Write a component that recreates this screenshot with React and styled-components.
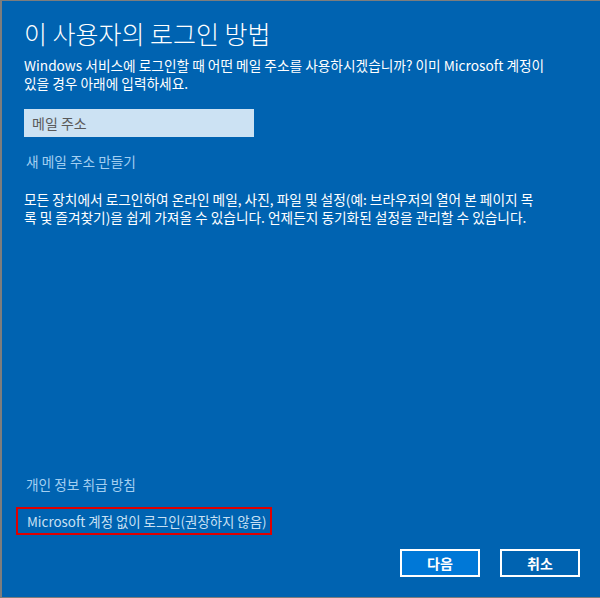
import React from "react";
import styled, { createGlobalStyle } from "styled-components";

const GlobalStyle = createGlobalStyle`
  html, body {
    margin: 0;
    padding: 0;
    background: #7d7d7d;
  }
  body {
    font-family: "Noto Sans CJK KR", "Noto Sans", sans-serif;
  }
`;

const App = () => {
  return (
    <>
      <GlobalStyle />
      <Window>
        <Title>이 사용자의 로그인 방법</Title>
        <Text>
          Windows 서비스에 로그인할 때 어떤 메일 주소를 사용하시겠습니까? 이미 Microsoft 계정이
          <br />
          있을 경우 아래에 입력하세요.
        </Text>
        <EmailInput placeholder="메일 주소" />
        <CreateLink>새 메일 주소 만들기</CreateLink>
        <Paragraph>
          모든 장치에서 로그인하여 온라인 메일, 사진, 파일 및 설정(예: 브라우저의 열어 본 페이지 목
          <br />
          록 및 즐겨찾기)을 쉽게 가져올 수 있습니다. 언제든지 동기화된 설정을 관리할 수 있습니다.
        </Paragraph>
        <Footer>
          <PrivacyLink>개인 정보 취급 방침</PrivacyLink>
          <Highlight>
            <LinkText light>Microsoft 계정 없이 로그인(권장하지 않음)</LinkText>
          </Highlight>
          <Buttons>
            <Button primary>다음</Button>
            <Button>취소</Button>
          </Buttons>
        </Footer>
      </Window>
    </>
  );
};

export default App;

// ------------------ Styled Components ------------------

const Window = styled.div`
  box-sizing: border-box;
  margin: 1px 0 0 2px;
  height: 596px;
  background: #0063b1;
  padding: 0 0 0 22px;
  display: flex;
  flex-direction: column;
  color: #fff;
  overflow: hidden;
`;

const Title = styled.h1`
  margin: 15px 0 0;
  font-size: 25px;
  font-weight: 300;
  line-height: 34px;
  white-space: nowrap;
`;

const Text = styled.p`
  margin: 6px 0 0;
  font-size: 13.7px;
  line-height: 18px;
  white-space: nowrap;
`;

const EmailInput = styled.input`
  box-sizing: border-box;
  margin-top: 17px;
  width: 230px;
  height: 28px;
  border: none;
  outline: none;
  background: #cce2f3;
  padding: 0 8px;
  font-family: inherit;
  font-size: 14px;

  &::placeholder {
    color: #5a5a5a;
  }
`;

const LinkText = styled.div`
  font-size: 13.7px;
  line-height: 20px;
  color: ${({ light }) => (light ? "#c8e0f4" : "#a3cff1")};
  white-space: nowrap;
`;

const CreateLink = styled(LinkText)`
  margin: 14px 0 0 2px;
`;

const PrivacyLink = styled(LinkText)`
  margin-left: 2px;
`;

const Paragraph = styled(Text)`
  margin-top: 19px;
`;

const Footer = styled.div`
  margin-top: auto;
  display: flex;
  flex-direction: column;
  align-items: flex-start;
`;

const Highlight = styled.div`
  margin: 13px 0 0 -8px;
  border: 2px solid #e00000;
  padding: 2px 3px 2px 9px;

  & > ${LinkText} {
    font-size: 13.4px;
  }
`;

const Buttons = styled.div`
  align-self: flex-end;
  display: flex;
  gap: 20px;
  margin: 14px 20px 20px 0;
`;

const Button = styled.button`
  box-sizing: border-box;
  width: 80px;
  height: 28px;
  border: 2px solid #fff;
  background: ${({ primary }) => (primary ? "#0078d7" : "#0063b1")};
  color: #fff;
  font-family: inherit;
  font-size: 14px;
  font-weight: 700;
  padding: 0;
`;
